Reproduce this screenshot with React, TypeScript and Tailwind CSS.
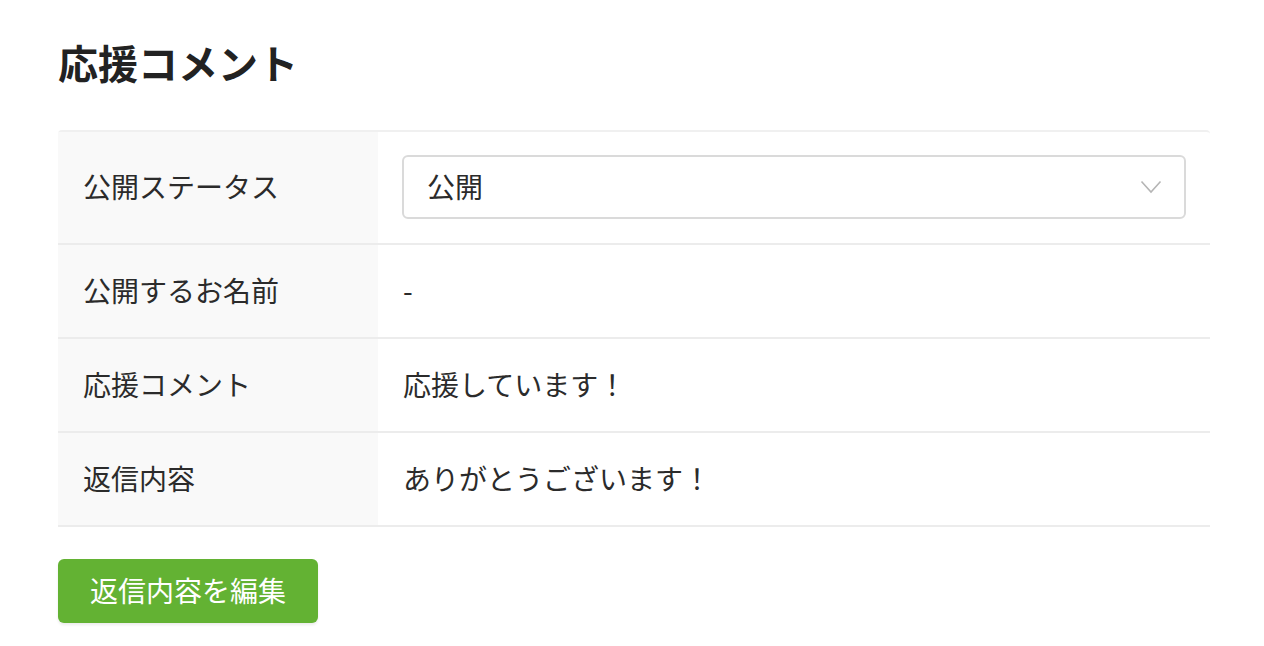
const rows = [
  { label: "公開するお名前", value: "-" },
  { label: "応援コメント", value: "応援しています！" },
  { label: "返信内容", value: "ありがとうございます！" },
];

export default function App() {
  return (
    <div
      className="min-h-[646px] bg-white pl-[58px] pr-[54px] pt-[33px] text-[#2b2b2b]"
      style={{ fontFamily: '"Noto Sans CJK JP", "Noto Sans", sans-serif' }}
    >
      <h1 className="text-[40px] font-bold leading-[58px] text-[#222]">応援コメント</h1>

      <div className="mt-[39px] rounded-t-[4px] border-t-2 border-[#f0f0f0]">
        <div className="flex border-b-2 border-[#ececec]">
          <div className="flex w-[320px] shrink-0 items-center bg-[#f9f9f9] px-[25px] pb-[3px] text-[28px]">
            公開ステータス
          </div>
          <div className="flex-1 px-[24px] pb-[24px] pt-[23px]">
            <div className="flex h-[64px] items-center justify-between rounded-[6px] border-2 border-[#dadada] bg-white pb-[3px] pl-[23px] pr-[22px] text-[28px]">
              <span>公開</span>
              <svg width="22" height="14" viewBox="0 0 22 14" fill="none" className="mt-[3px]">
                <path d="M1.5 1.5 L11 12 L20.5 1.5" stroke="#b5b5b5" strokeWidth="1.6" />
              </svg>
            </div>
          </div>
        </div>
        {rows.map((r) => (
          <div key={r.label} className="flex border-b-2 border-[#ececec]">
            <div className="flex h-[92px] w-[320px] shrink-0 items-center bg-[#f9f9f9] px-[25px] pb-[3px] text-[28px]">
              {r.label}
            </div>
            <div className="flex flex-1 items-center px-[25px] pb-[3px] text-[28px]">{r.value}</div>
          </div>
        ))}
      </div>

      <button className="mt-[32px] flex h-[64px] w-[260px] items-center justify-center rounded-[6px] bg-[#63b233] pb-[3px] text-[28px] text-white shadow-[0_2px_3px_rgba(0,0,0,0.08)]">
        返信内容を編集
      </button>
    </div>
  );
}
